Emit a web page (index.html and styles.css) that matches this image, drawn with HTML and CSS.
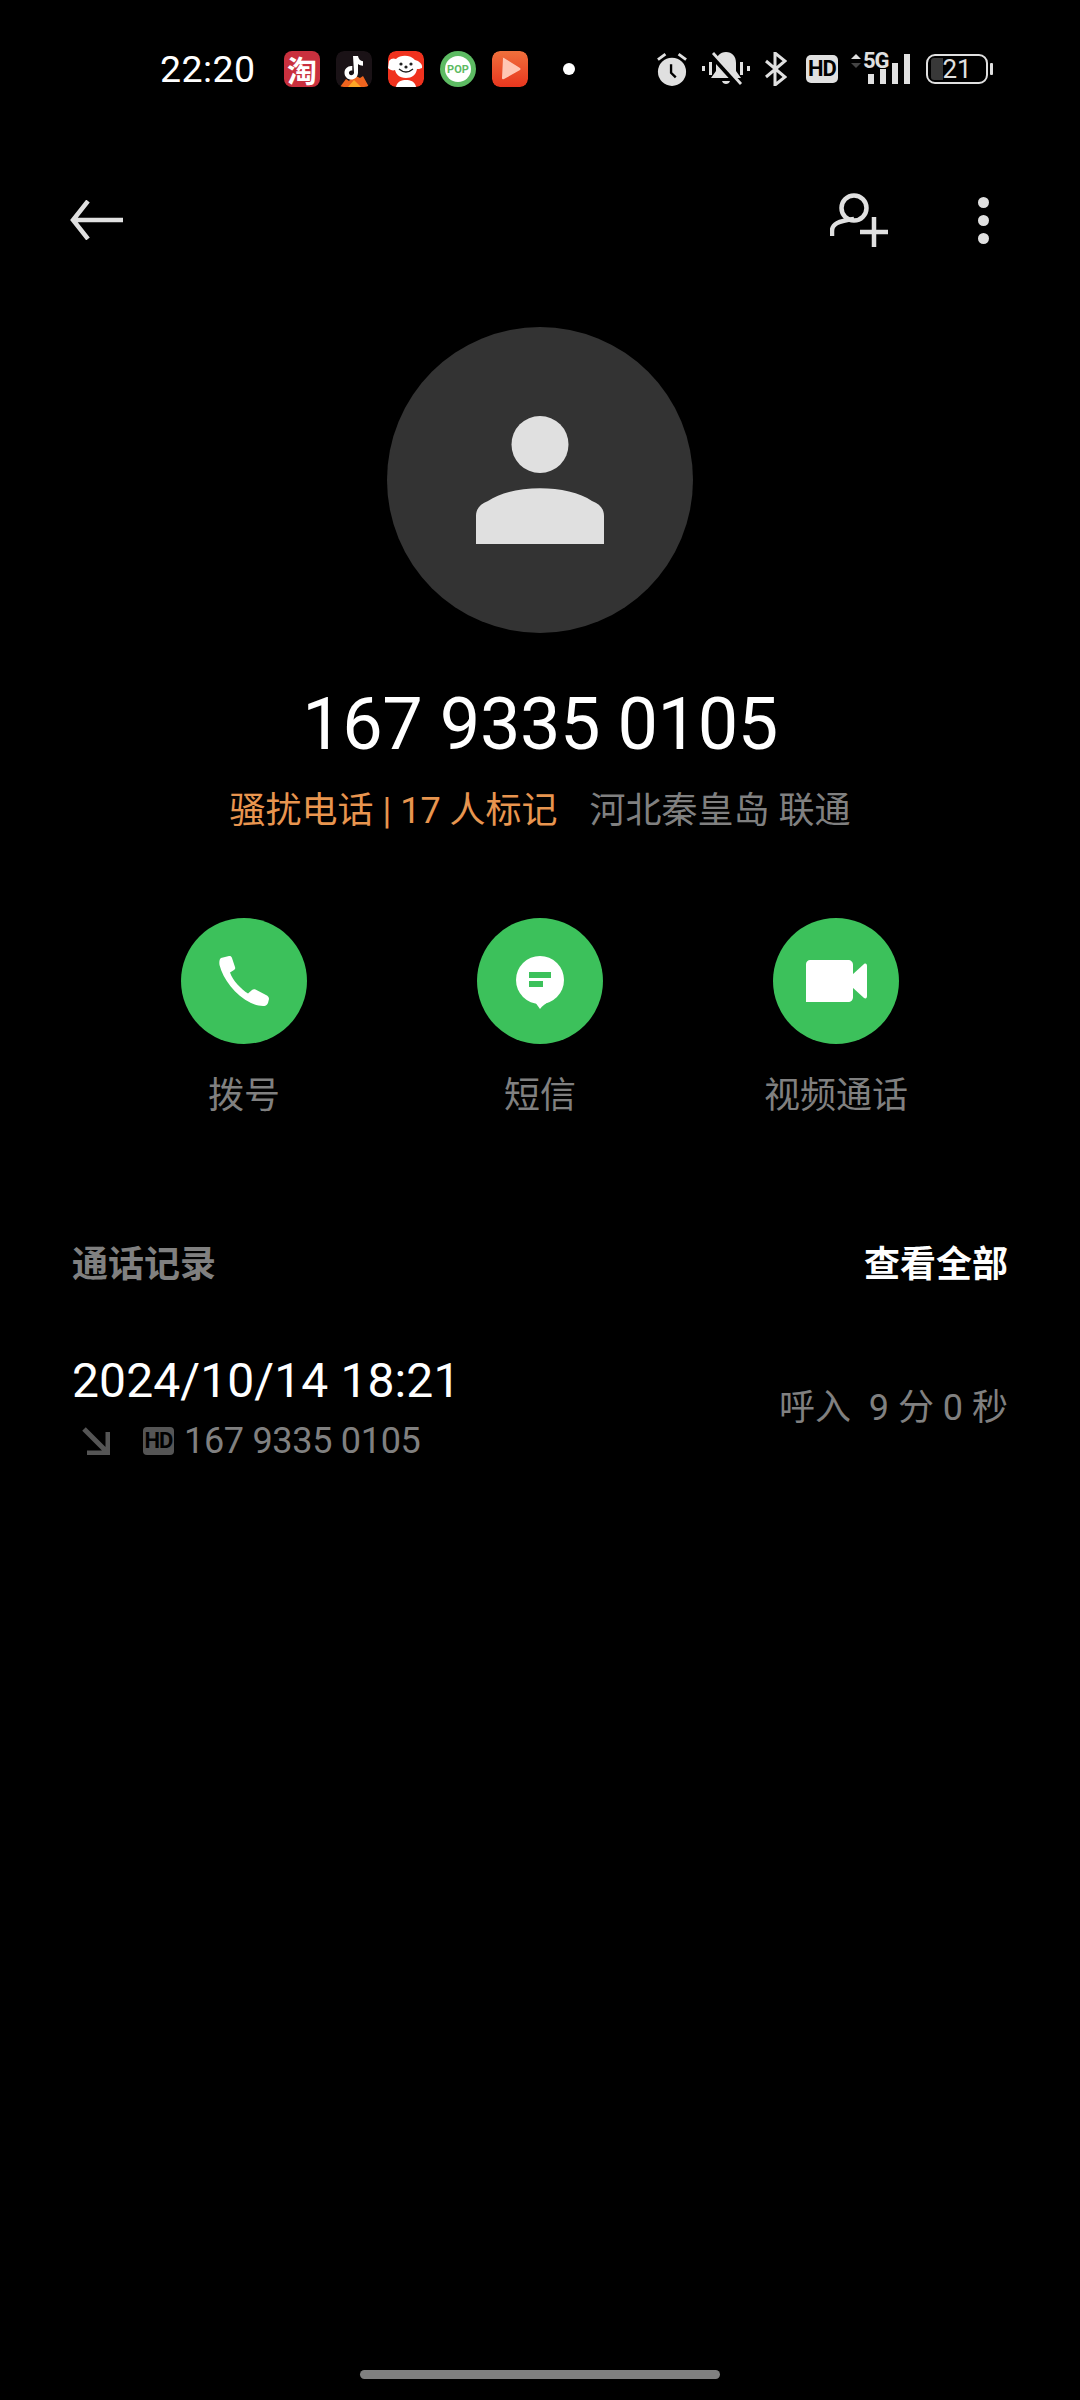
FILE: index.html
```html
<!DOCTYPE html>
<html lang="zh-CN">
<head>
<meta charset="utf-8">
<title>167 9335 0105</title>
<link rel="stylesheet" href="styles.css">
</head>
<body>
<div class="phone">
  <header class="status">
    <span class="time">22:20</span>
    <div class="apps">
      <span class="app app-tao"><span class="tao-char">淘</span></span>
      <svg class="app" viewBox="0 0 36 36"><rect width="36" height="36" rx="8" fill="#1a1216"/><path d="M4 36 L10 28 L13 30 L18 24 L24 27 L27 25 L33 36 Z" fill="#f0641e"/><path d="M12 36 L18 29 L25 36 Z" fill="#ffa726"/><path d="M17 5 h5 c.4 3 2.500 5 5 5.300 v4.500 c-2 0-3.700-.7-5-1.700 v8.400 c0 4.400-3.400 7-6.800 7 c-3.700 0-6.700-3-6.700-6.800 c0-4.300 3.700-7.400 7.800-6.700 v4.600 c-1.800-.6-3.400.6-3.400 2.200 c0 1.400 1 2.400 2.300 2.400 c1.500 0 2.800-1 2.800-2.700 Z" fill="#fff"/></svg>
      <svg class="app" viewBox="0 0 36 36"><rect width="36" height="36" rx="8" fill="#f0321e"/><path d="M8 8 C13 3 23 4 27 9 C31 10 35 13 34 17 C32 18 30 18 29 18 C28 24 24 27 18 27 C11 27 8 23 7 19 C5 20 2 19 0 17 L1 10 C3 7 6 7 8 8 Z" fill="#fff"/><circle cx="13" cy="13" r="1.600" fill="#222"/><circle cx="23" cy="13" r="1.600" fill="#222"/><path d="M11 18 Q18 24 25 18" fill="none" stroke="#222" stroke-width="1.300"/><circle cx="18" cy="16" r="1.600" fill="#222"/><path d="M8 36 C9 30 14 29 18 29 C22 29 27 30 28 36 Z" fill="#fff"/></svg>
      <span class="app app-pop"><span class="pop-text">POP</span></span>
      <svg class="app" viewBox="0 0 36 36"><defs><linearGradient id="pg" x1="0" y1="0" x2="0" y2="1"><stop offset="0" stop-color="#f0703c"/><stop offset="1" stop-color="#e8361e"/></linearGradient></defs><rect width="36" height="36" rx="8" fill="url(#pg)"/><path d="M11 7 Q10 6 12 7 L28 17 Q29 18 28 19 L12 28 Q10 29 10 27 Z" fill="#ffc7b4"/></svg>
      <span class="dot"></span>
    </div>
    <div class="sys">
      <svg class="ic-alarm" viewBox="0 0 32 36"><circle cx="16" cy="21" r="15" fill="#e0e0e0"/><path d="M1 8 L9 2 M31 8 L23 2" stroke="#e0e0e0" stroke-width="3"/><path d="M15 13 V22 L20 27" fill="none" stroke="#000" stroke-width="2.500"/></svg>
      <svg class="ic-bell" viewBox="0 0 48 36"><path d="M0 15 h3 v5 h-3 Z M7 11 h3 v13 h-3 Z M38 11 h3 v13 h-3 Z M45 15 h3 v5 h-3 Z" fill="#e0e0e0"/><path d="M24 1 c6 0 10 4 10 11 v8 l5 7 H9 l5-7 v-8 c0-7 4-11 10-11 Z M20 30 h8 c-1 4-7 4-8 0 Z" fill="#e0e0e0"/><path d="M9 3 L37 34" stroke="#000" stroke-width="6"/><path d="M11 2 L39 33" stroke="#e0e0e0" stroke-width="2.800"/></svg>
      <svg class="ic-bt" viewBox="0 0 22 34"><path d="M1 9 L20 25 L10 33 V1 L20 9 L1 25" fill="none" stroke="#e0e0e0" stroke-width="3"/></svg>
      <span class="hd">HD</span>
      <div class="net">
        <svg class="net-arrows" viewBox="0 0 12 14"><path d="M6 0 L11 5 H1 Z" fill="#e0e0e0"/><path d="M6 14 L11 9 H1 Z" fill="#444"/></svg>
        <span class="net-5g">5G</span>
        <svg class="net-bars" viewBox="0 0 42 30"><path d="M0 20 h6 v10 h-6 Z M12 15 h6 v15 h-6 Z M24 9 h6 v21 h-6 Z M36 0 h6 v30 h-6 Z" fill="#e0e0e0"/></svg>
      </div>
      <div class="battery"><span class="batt-level"></span><span class="batt-num">21</span></div>
    </div>
  </header>

  <nav class="toolbar">
    <svg class="ic-back" viewBox="0 0 54 40"><path d="M53 20 H4 M18 1 L3 20 L18 39" fill="none" stroke="#e0e0e0" stroke-width="4.500"/></svg>
    <div class="tool-right">
      <svg class="ic-add" viewBox="0 0 58 54"><circle cx="24" cy="15" r="12.500" fill="none" stroke="#e0e0e0" stroke-width="4.500"/><path d="M2 43 V38 C2 31 8 28 24 26" fill="none" stroke="#e0e0e0" stroke-width="4.500"/><path d="M44 24 V54 M30 39 H58" stroke="#e0e0e0" stroke-width="4.500"/></svg>
      <div class="more"><i></i><i></i><i></i></div>
    </div>
  </nav>

  <section class="contact">
    <div class="avatar">
      <svg class="ic-person" viewBox="0 0 128 128"><circle cx="64" cy="28.500" r="28.500" fill="#e0e0e0"/><path d="M0 128 V100 C0 93 4 88 12 85 C36 68 92 68 116 85 C124 88 128 93 128 100 V128 Z" fill="#e0e0e0"/></svg>
    </div>
    <h1 class="number">167 9335 0105</h1>
    <p class="meta"><span class="spam">骚扰电话 | 17 人标记</span><span class="region">河北秦皇岛 联通</span></p>
  </section>

  <section class="actions">
    <div class="action">
      <span class="circle"><svg class="ic-phone" viewBox="0 0 50 50"><path d="M2 2 L10 0 C11.500 -.3 12.500 .5 13 2 L16 11 C16.500 12.500 16 13.500 15 14 L11 16.500 C14 25 22 33 29 37.500 L33 34 C34 33 35.500 33 36.500 33.500 L47 39 C49 40 50 41 50 43 L49 47 C48 49.500 46 50 44 50 C40 50 36 49 32 47 C16 39 4 23 .5 9 C0 6 .5 3 2 2 Z" fill="#fff"/></svg></span>
      <span class="label">拨号</span>
    </div>
    <div class="action">
      <span class="circle"><svg class="ic-msg" viewBox="0 0 48 53"><circle cx="24" cy="24" r="24" fill="#fff"/><path d="M19 46 L24 53 C26 50 30 47 34 45 Z" fill="#fff"/><path d="M13 16 H35 V22 H13 Z M13 25 H27 V31 H13 Z" fill="#3cc15b"/></svg></span>
      <span class="label">短信</span>
    </div>
    <div class="action">
      <span class="circle"><svg class="ic-video" viewBox="0 0 61 42"><path d="M4 0 H42 C45 0 47 2 47 5 V37 C47 40 45 42 42 42 H0 V4 C0 2 2 0 4 0 Z" fill="#fff"/><path d="M46 15 L58 4 C60 3 61 4 61 6 V36 C61 38 60 39 58 38 L46 27 Z" fill="#fff"/></svg></span>
      <span class="label">视频通话</span>
    </div>
  </section>

  <section class="log">
    <div class="log-head">
      <span class="log-title">通话记录</span>
      <span class="log-all">查看全部</span>
    </div>
    <div class="log-row">
      <div class="log-main">
        <div class="log-date">2024/10/14 18:21</div>
        <div class="log-sub">
          <svg class="ic-in" viewBox="0 0 28 28"><path d="M2 2 L24 24 M26 5 V26 H5" fill="none" stroke="#555" stroke-width="5"/></svg>
          <span class="hd-small">HD</span>
          <span class="log-num">167 9335 0105</span>
        </div>
      </div>
      <div class="log-dur">呼入&nbsp; 9 分 0 秒</div>
    </div>
  </section>

  <div class="home-wrap"><span class="home"></span></div>
</div>
</body>
</html>
```

FILE: styles.css
```css
* { box-sizing: border-box; }
html, body { margin: 0; padding: 0; background: #000; }
body { font-family: Roboto, "Noto Sans CJK SC", sans-serif; }
.phone { width: 1080px; height: 2400px; display: flex; flex-direction: column; background: #000; color: #fff; overflow: hidden; }

.status { height: 138px; display: flex; align-items: center; padding-left: 160px; padding-right: 87px; }
.time { width: 124px; font-size: 37.500px; color: #fff; letter-spacing: 0.4px; }
.apps { display: flex; align-items: center; gap: 16px; }
.app { width: 36px; height: 36px; display: flex; align-items: center; justify-content: center; border-radius: 8px; flex: none; }
.app-tao { background: #c9303e; }
.tao-char { font: 700 30px/36px "Noto Sans CJK SC", sans-serif; color: #fff; }
.app-pop { background: #5dbb63; border-radius: 50%; }
.pop-text { background: #fff; color: #5dbb63; font: 700 11px Roboto, sans-serif; width: 26px; height: 26px; border-radius: 50%; display: flex; align-items: center; justify-content: center; }
.dot { width: 12px; height: 12px; border-radius: 50%; background: #fff; margin-left: 19px; }
.sys { margin-left: auto; display: flex; align-items: center; }
.ic-alarm { width: 30px; height: 34px; }
.ic-bell { width: 48px; height: 36px; margin-left: 15px; }
.ic-bt { width: 22px; height: 34px; margin-left: 15px; }
.hd { width: 32px; height: 28px; margin-left: 19px; border-radius: 5px; background: #e0e0e0; color: #000; font: 700 22px/28px Roboto, sans-serif; text-align: center; letter-spacing: -1px; }
.net { position: relative; width: 60px; height: 30px; margin-left: 12px; }
.net-arrows { position: absolute; left: 0; top: 0; width: 12px; height: 14px; }
.net-5g { position: absolute; left: 13px; top: -4px; font: 700 22px/22px Roboto, sans-serif; color: #e0e0e0; letter-spacing: -1px; }
.net-bars { position: absolute; right: 0; top: 0; width: 42px; height: 30px; }
.battery { position: relative; width: 62px; height: 30px; margin-left: 16px; margin-right: 5px; border: 2.500px solid #e0e0e0; border-radius: 9px; display: flex; align-items: center; justify-content: center; }
.battery::after { content: ""; position: absolute; right: -7px; top: 7px; width: 3px; height: 12px; background: #e0e0e0; border-radius: 1px; }
.batt-level { position: absolute; left: 3px; top: 2px; bottom: 2px; width: 12px; background: #383838; border-radius: 3px 0 0 3px; }
.batt-num { position: relative; font-size: 26px; line-height: 26px; color: #e0e0e0; }

.toolbar { height: 164px; display: flex; align-items: center; justify-content: space-between; padding-left: 70px; padding-right: 91px; }
.ic-back { width: 54px; height: 40px; }
.tool-right { display: flex; align-items: center; gap: 90px; }
.ic-add { width: 58px; height: 54px; }
.more { display: flex; flex-direction: column; gap: 7px; }
.more i { width: 11px; height: 11px; border-radius: 50%; background: #e0e0e0; display: block; }

.contact { display: flex; flex-direction: column; align-items: center; margin-top: 25px; }
.avatar { width: 306px; height: 306px; border-radius: 50%; background: #333; display: flex; align-items: center; justify-content: center; }
.ic-person { width: 128px; height: 128px; }
.number { margin: 52px 0 0; font-size: 72px; line-height: 80px; font-weight: 400; color: #fff; letter-spacing: -0.4px; }
.meta { margin: 22px 0 0; font-size: 36px; line-height: 48px; display: flex; gap: 32px; }
.spam { color: #e8954f; }
.region { color: #808080; }

.actions { display: grid; grid-template-columns: repeat(3, 296px); padding: 0 96px; margin-top: 83px; }
.action { display: flex; flex-direction: column; align-items: center; }
.circle { width: 126px; height: 126px; border-radius: 50%; background: #3cc15b; display: flex; align-items: center; justify-content: center; }
.ic-phone { width: 50px; height: 50px; }
.ic-msg { width: 48px; height: 53px; margin-top: 3px; }
.ic-video { width: 61px; height: 42px; }
.label { margin-top: 28px; font-size: 36px; line-height: 48px; color: #808080; }

.log { margin-top: 121px; padding: 0 72px; }
.log-head { display: flex; justify-content: space-between; font-size: 36px; line-height: 48px; font-weight: 700; }
.log-title { color: #808080; }
.log-all { color: #fff; }
.log-row { display: flex; align-items: center; justify-content: space-between; margin-top: 62px; }
.log-date { font-size: 48px; line-height: 60px; color: #fff; letter-spacing: 0.1px; }
.log-sub { display: flex; align-items: center; height: 44px; margin-top: 8px; }
.ic-in { width: 28px; height: 28px; margin-left: 10px; }
.hd-small { width: 31px; height: 28px; margin-left: 33px; border-radius: 4px; background: #555; color: #000; font: 700 22px/28px Roboto, sans-serif; text-align: center; letter-spacing: -1px; }
.log-num { margin-left: 10px; font-size: 36px; color: #808080; letter-spacing: -0.3px; }
.log-dur { font-size: 36px; color: #808080; margin-bottom: 6px; }

.home-wrap { margin-top: auto; height: 30px; display: flex; justify-content: center; }
.home { width: 360px; height: 9px; border-radius: 5px; background: #808080; }
```
